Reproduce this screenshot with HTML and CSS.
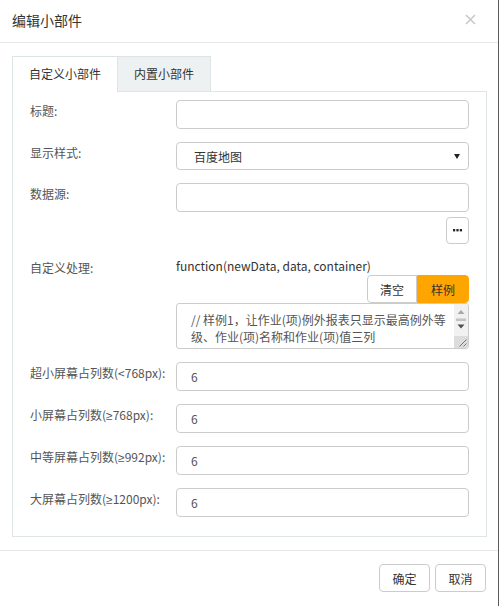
FILE: index.html
```html
<!DOCTYPE html>
<html lang="zh-CN">
<head>
<meta charset="utf-8">
<title>编辑小部件</title>
<link rel="stylesheet" href="styles.css">
</head>
<body>
<div class="modal">
  <div class="modal-header">
    <h4 class="modal-title">编辑小部件</h4>
    <span class="close" aria-label="关闭">
      <svg width="11" height="11" viewBox="0 0 11 11"><path d="M1 1 L10 10 M10 1 L1 10" stroke="#c9c9c9" stroke-width="1.6" fill="none"/></svg>
    </span>
  </div>
  <div class="modal-body">
    <ul class="tabs">
      <li class="tab active">自定义小部件</li>
      <li class="tab">内置小部件</li>
    </ul>
    <div class="panel">
      <div class="row">
        <label class="label">标题:</label>
        <div class="control"><div class="input"></div></div>
      </div>
      <div class="row">
        <label class="label">显示样式:</label>
        <div class="control"><div class="input select"><span class="select-text">百度地图</span><span class="caret"></span></div></div>
      </div>
      <div class="row">
        <label class="label">数据源:</label>
        <div class="control">
          <div class="input"></div>
          <div class="btn-line"><button class="btn dots" aria-label="更多"><svg width="9" height="3" viewBox="0 0 9 3"><rect x="0" y="0" width="2.2" height="2.4" fill="#222"/><rect x="3.4" y="0" width="2.2" height="2.4" fill="#222"/><rect x="6.8" y="0" width="2.2" height="2.4" fill="#222"/></svg></button></div>
        </div>
      </div>
      <div class="row">
        <label class="label">自定义处理:</label>
        <div class="control">
          <div class="func">function(newData, data, container)</div>
          <div class="btn-line"><div class="btn-group"><button class="btn gbtn first">清空</button><button class="btn gbtn warn">样例</button></div></div>
          <div class="textarea">
            <div class="ta-text">
              <div class="ta-line">// 样例1，让作业(项)例外报表只显示最高例外等</div>
              <div class="ta-line">级、作业(项)名称和作业(项)值三列</div>
              <div class="ta-line">并且将最高例外等级显示为图标</div>
            </div>
            <svg class="scrollbar" width="14" height="44" viewBox="0 0 14 44">
              <rect x="0" y="0" width="14" height="32" fill="#f1f1f1"/>
              <polygon points="3.5,10 10.5,10 7,6" fill="#a8a8a8"/>
              <rect x="2" y="14.5" width="10" height="2.5" fill="#c3c3c3"/>
              <polygon points="3.5,20.5 10.5,20.5 7,24.5" fill="#505050"/>
              <rect x="0" y="32" width="14" height="12" fill="#dcdcdc"/>
              <path d="M12.5 35.5 L5.5 42.5 M12.5 39.5 L9.5 42.5" stroke="#7a7a7a" stroke-width="1" fill="none"/>
            </svg>
          </div>
        </div>
      </div>
      <div class="row">
        <label class="label">超小屏幕占列数(&lt;768px):</label>
        <div class="control"><div class="input"><span class="val">6</span></div></div>
      </div>
      <div class="row">
        <label class="label">小屏幕占列数(<span class="sym">≥</span>768px):</label>
        <div class="control"><div class="input"><span class="val">6</span></div></div>
      </div>
      <div class="row">
        <label class="label">中等屏幕占列数(<span class="sym">≥</span>992px):</label>
        <div class="control"><div class="input"><span class="val">6</span></div></div>
      </div>
      <div class="row">
        <label class="label">大屏幕占列数(<span class="sym">≥</span>1200px):</label>
        <div class="control"><div class="input"><span class="val">6</span></div></div>
      </div>
    </div>
  </div>
  <div class="modal-footer">
    <button class="btn fbtn">确定</button>
    <button class="btn fbtn">取消</button>
  </div>
</div>
</body>
</html>
```
FILE: styles.css
```css
* { box-sizing: border-box; }
html, body {
  margin: 0;
  padding: 0;
  background: #fff;
}
body {
  font-family: "Noto Sans CJK SC", "Noto Sans", sans-serif;
  font-size: 12px;
  color: #333;
}
.modal {
  width: 499px;
  height: 606px;
  border-right: 1px solid #5a5a5a;
  background: #fff;
}
.modal-header {
  height: 43px;
  border-bottom: 1px solid #e8e8e8;
  display: flex;
  align-items: center;
  justify-content: space-between;
  padding: 0 22px 3px 12px;
}
.modal-title {
  margin: 0;
  font-size: 14px;
  font-weight: normal;
  line-height: 20px;
  color: #333;
}
.close {
  display: flex;
  width: 11px;
  height: 11px;
}
.modal-body {
  padding: 13px 11px 13px 12px;
}
.tabs {
  list-style: none;
  margin: 0;
  padding: 0;
  display: flex;
  align-items: flex-start;
  height: 35px;
}
.tab {
  height: 35px;
  line-height: 34px;
  padding: 0 16px;
  border: 1px solid #dde4e6;
  border-bottom: none;
  background: #eef1f2;
  color: #333;
  font-size: 12px;
}
.tab + .tab {
  border-left: none;
}
.tab.active {
  background: #fff;
  height: 36px;
  position: relative;
  z-index: 1;
}
.panel {
  border: 1px solid #dfe5e7;
  padding: 8px 17px 6px 17px;
}
.row {
  display: grid;
  grid-template-columns: 146px 293px;
}
.label {
  padding-top: 2px;
  line-height: 17px;
  color: #555;
  font-size: 12px;
  white-space: nowrap;
}
.sym {
  font-family: "Liberation Sans", "DejaVu Sans", sans-serif;
}
.control {
  margin-bottom: 13px;
}
.input {
  height: 29px;
  border: 1px solid #ccc;
  border-radius: 4px;
  background: #fff;
  display: flex;
  align-items: center;
  padding-left: 14px;
}
.input.select {
  height: 28px;
  padding: 0 8px 0 17px;
  justify-content: space-between;
}
.select-text {
  color: #333;
}
.caret {
  width: 0;
  height: 0;
  border-left: 3px solid transparent;
  border-right: 3px solid transparent;
  border-top: 5px solid #222;
}
.val {
  color: #555;
}
.btn-line {
  display: flex;
  justify-content: flex-end;
}
.btn {
  font-family: "Noto Sans CJK SC", "Noto Sans", sans-serif;
  font-size: 12px;
  color: #333;
  background: #fff;
  border: 1px solid #ccc;
  border-radius: 4px;
  padding: 0;
  cursor: pointer;
}
.dots {
  width: 23px;
  height: 27px;
  margin-top: 5px;
  display: flex;
  align-items: center;
  justify-content: center;
}
.dots svg {
  display: block;
}
.func {
  line-height: 17px;
  color: #333;
}
.btn-group {
  display: flex;
  margin-top: 1px;
}
.gbtn {
  height: 28px;
}
.gbtn.first {
  width: 50px;
  border-radius: 4px 0 0 4px;
}
.gbtn.warn {
  width: 52px;
  background: #ffa500;
  border-color: #ffa500;
  border-radius: 0 4px 4px 0;
}
.textarea {
  height: 46px;
  border: 1px solid #ccc;
  border-radius: 3px;
  display: flex;
  overflow: hidden;
  background: #fff;
}
.ta-text {
  flex: 1;
  overflow: hidden;
  padding: 7px 0 0 14px;
  line-height: 17px;
  color: #555;
}
.ta-line {
  white-space: nowrap;
}
.scrollbar {
  flex: none;
  display: block;
}
.modal-footer {
  border-top: 1px solid #e8e8e8;
  padding: 13px 12px 0 0;
  display: flex;
  justify-content: flex-end;
  gap: 5px;
}
.fbtn {
  width: 51px;
  height: 28px;
}
```
